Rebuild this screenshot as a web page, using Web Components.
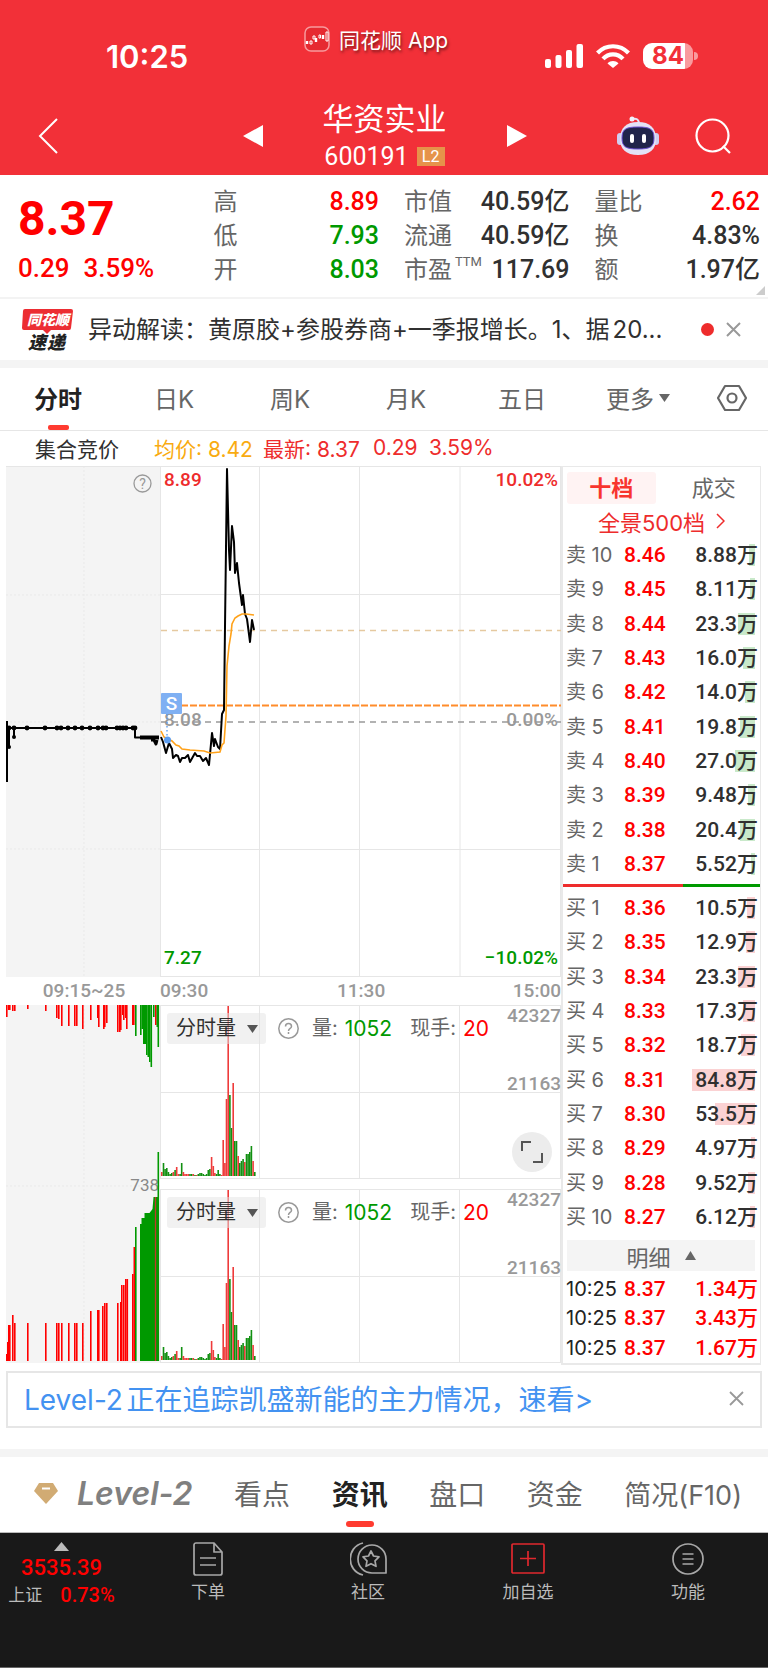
<!DOCTYPE html>
<html lang="zh-CN">
<head>
<meta charset="utf-8">
<meta name="viewport" content="width=device-width, initial-scale=1">
<title>华资实业 600191</title>
<style>
  :root {
    --up: #ff0000;
    --down: #009900;
    --brand: #f23038;
    --grey: #666666;
    --pale: #999999;
    --ink: #303030;
    --line: #e9e9e9;
    --num: Roboto, "Noto Sans CJK SC", sans-serif;
  }
  body {
    margin: 0;
    background: #fff;
    color: var(--ink);
    font-family: Inter, "Noto Sans CJK SC", sans-serif;
    font-size: 24px;
  }
</style>
</head>
<body>
<stock-page></stock-page>

<script>
  const base = `
    * { box-sizing: border-box; }
    button, select, a { font: inherit; color: inherit; text-decoration: none; }
    button { border: 0; padding: 0; background: none; white-space: nowrap; }
    svg { display: block; flex: none; }
  `;

  class BaseElement extends HTMLElement {
    constructor() {
      super();
      this._shadowRoot = this.attachShadow({mode: 'open'});
    }

    connectedCallback() {
      this._shadowRoot.innerHTML = `<style>${base}</style>${this.render()}`;
    }
  }

  class StatusBar extends BaseElement {
    render() {
      return `
        <style>
          :host { display: grid; grid-template-columns: 198px 1fr auto; padding: 18px 70px 0 106px; height: 87px; color: #fff; }
          .time { font-size: 31px; font-weight: 600; line-height: 40px; margin-top: 19px; }
          .app { display: flex; gap: 9px; height: 42px; align-items: center; font-size: 21px; text-shadow: 1px 2px 3px rgba(0, 0, 0, .55); }
          .signals { display: flex; gap: 13px; justify-content: flex-end; align-items: center; height: 40px; margin-top: 18px; }
          .battery { display: flex; align-items: center; gap: 1px; }
          .level { width: 50px; height: 26px; border-radius: 9px; line-height: 26px; text-align: center; font-size: 24px; font-weight: 700; color: var(--brand);
            background: linear-gradient(90deg, #fff 84%, #f99a9e 84%); }
          .nub { width: 4px; height: 8px; border-radius: 0 4px 4px 0; background: #f99a9e; }
        </style>
        <div class="time">10:25</div>
        <div class="app">
          <svg width="26" height="26" viewBox="0 0 26 26" fill="none">
            <rect x="1" y="1" width="24" height="24" rx="6" fill="#e62a31" stroke="#f79a9d" stroke-width="1.5"/>
            <path d="M3 15v3M12 12v4M19 9v4" stroke="#fff" stroke-width="2.4"/>
            <path d="M6 15h2v3H6zM9 10h2v3H9zM15 9h1.500v3H15zM22 6h2v9h-2z" stroke="#fff" stroke-width="1"/>
          </svg>
          <span>同花顺 App</span>
        </div>
        <div class="signals">
          <svg width="38" height="24" viewBox="0 0 38 24" fill="#fff">
            <rect y="15" width="6" height="9" rx="2"/><rect x="10.500" y="11" width="6" height="13" rx="2"/>
            <rect x="21" y="6" width="6" height="18" rx="2"/><rect x="31.500" width="6.500" height="24" rx="2"/>
          </svg>
          <svg width="34" height="24" viewBox="0 0 34 24" fill="none" stroke="#fff" stroke-width="4.200">
            <path d="M1.500 9C10 0 24 0 32.500 9"/><path d="M7 14.800c5.500-6 14.500-6 20 0"/>
            <path d="M11.500 19.500L17 24l5.500-4.500c-3-3.200-8-3.200-11 0z" fill="#fff" stroke="none"/>
          </svg>
          <div class="battery"><div class="level">84</div><div class="nub"></div></div>
        </div>`;
    }
  }

  class StockHeader extends BaseElement {
    render() {
      return `
        <style>
          :host { display: grid; grid-template-columns: 1fr 284px 1fr; padding: 9px 37px 0 38px; height: 88px; color: #fff; }
          .side, .middle { display: flex; align-items: center; height: 79px; }
          .side.right { justify-content: flex-end; gap: 36px; }
          .middle { justify-content: space-between; }
          h1 { margin: 0; font-size: 31px; font-weight: 400; line-height: 42px; }
          .title { text-align: center; }
          .code { display: flex; align-items: center; justify-content: center; gap: 8px; font-size: 25px; line-height: 34px; font-family: var(--num); }
          .badge { background: #e6934a; font-size: 16px; line-height: 19px; width: 28px; }
        </style>
        <div class="side">
          <button aria-label="返回"><svg width="20" height="36" viewBox="0 0 20 36" fill="none" stroke="#fff" stroke-width="2"><path d="M19 1L2 18l17 17"/></svg></button>
        </div>
        <div class="middle">
          <button aria-label="上一只"><svg width="20" height="22" fill="#fff"><path d="M20 0v22L0 11z"/></svg></button>
          <div class="title">
            <h1>华资实业</h1>
            <div class="code"><span>600191</span><span class="badge">L2</span></div>
          </div>
          <button aria-label="下一只"><svg width="20" height="22" fill="#fff"><path d="M0 0v22l20-11z"/></svg></button>
        </div>
        <div class="side right">
          <button aria-label="智能助手">
            <svg width="42" height="40" viewBox="0 0 42 40">
              <path d="M15 3c4-1 7 0 7 5" fill="none" stroke="#e5e4f7" stroke-width="2"/>
              <circle cx="15" cy="3" r="2.500" fill="#f2f1fb"/>
              <rect y="17" width="6" height="12" rx="3" fill="#cfcef0"/><rect x="36" y="17" width="6" height="12" rx="3" fill="#cfcef0"/>
              <path d="M21 6c12 0 18 6 18 17 0 10-6 16-18 16S3 33 3 23C3 12 9 6 21 6z" fill="#e3e2f6"/>
              <path d="M21 11c12 0 16 2 16 11s-4 11-16 11S5 31 5 22s4-11 16-11z" fill="#20244a" stroke="#6a4fd0" stroke-width="1"/>
              <rect x="13" y="18" width="4" height="9" rx="2" fill="#fff"/><rect x="25" y="18" width="4" height="9" rx="2" fill="#fff"/>
            </svg>
          </button>
          <button aria-label="搜索"><svg width="36" height="36" viewBox="0 0 36 36" fill="none" stroke="#fff" stroke-width="2.200"><circle cx="17.500" cy="17.500" r="16"/><path d="M28 28l7 7"/></svg></button>
        </div>`;
    }
  }

  class QuoteSummary extends BaseElement {
    render() {
      const columns = [
        [['高', '8.89', 'up'], ['低', '7.93', 'down'], ['开', '8.03', 'down']],
        [['市值', '40.59亿'], ['流通', '40.59亿'], ['市盈<sup>TTM</sup>', '117.69']],
        [['量比', '2.62', 'up'], ['换', '4.83%'], ['额', '1.97亿']]
      ];
      return `
        <style>
          :host { display: grid; grid-template-columns: 170fr 165fr 165fr 165fr; column-gap: 25px; position: relative;
            padding: 10px 8px 0 18px; height: 124px; border-bottom: 2px solid #f3f3f3; font-family: var(--num); }
          .price { color: var(--up); font-weight: 500; }
          .last { font-size: 48px; font-weight: 700; line-height: 68px; }
          .change { font-size: 26px; line-height: 30px; display: flex; gap: 14px; }
          dl { margin: 0; }
          dl div { display: flex; justify-content: space-between; line-height: 34px; }
          dt { color: var(--grey); white-space: nowrap; }
          dd { margin: 0; font-size: 25px; font-weight: 500; }
          sup { font-size: 13px; line-height: 0; vertical-align: 12px; margin-left: 3px; }
          .up { color: var(--up); }
          .down { color: var(--down); }
          .corner { position: absolute; right: 3px; bottom: 2px; }
        </style>
        <div class="price">
          <div class="last">8.37</div>
          <div class="change"><span>0.29</span><span>3.59%</span></div>
        </div>
        ${columns.map(rows => `<dl>${rows.map(([k, v, c = '']) => `<div><dt>${k}</dt><dd class="${c}">${v}</dd></div>`).join('')}</dl>`).join('')}
        <svg class="corner" width="9" height="9" fill="#ccc"><path d="M9 0v9H0z"/></svg>`;
    }
  }

  class NewsStrip extends BaseElement {
    render() {
      return `
        <style>
          :host { display: flex; align-items: center; height: 61px; padding: 0 27px 0 22px; }
          .news { flex: 1; min-width: 0; margin: 0 12px 0 14px; white-space: nowrap; line-height: 40px; text-autospace: normal; }
          .dot { width: 13px; height: 13px; border-radius: 50%; background: #ee2c2c; margin-right: 12px; }
        </style>
        <svg width="52" height="44" viewBox="0 0 52 44" font-weight="900" font-style="italic">
          <path d="M3 1h46a2 2 0 0 1 2 2l-2 17a2 2 0 0 1-2 2H29l-4 4-4-4H2a2 2 0 0 1-2-2L1 3a2 2 0 0 1 2-2z" fill="#ec2d33"/>
          <text x="5" y="17" font-size="14" fill="#fff">同花顺</text>
          <text x="6" y="41" font-size="18" fill="#222">速</text><text x="25" y="41" font-size="18" fill="#222">递</text>
        </svg>
        <a class="news" href="#news">异动解读：黄原胶+参股券商+一季报增长。1、据20...</a>
        <span class="dot"></span>
        <button aria-label="关闭"><svg width="15" height="15" fill="none" stroke="#999" stroke-width="2"><path d="M1 1l13 13M14 1L1 14"/></svg></button>`;
    }
  }

  class PeriodTabs extends BaseElement {
    render() {
      return `
        <style>
          :host { display: grid; grid-template-columns: repeat(6, 29fr) 18fr; height: 71px; border-top: 8px solid #f4f4f4; border-bottom: 1px solid #e6e6e6; color: var(--grey); justify-items: center; }
          button { position: relative; display: flex; align-items: center; gap: 5px; padding-bottom: 3px; }
          .on { color: #222; font-weight: 700; }
          .on::after { content: ""; position: absolute; left: 50%; bottom: 0; width: 21px; height: 5px; margin-left: -10px; border-radius: 2px; background: #ff3b30; }
        </style>
        <button class="on">分时</button>
        <button>日K</button>
        <button>周K</button>
        <button>月K</button>
        <button>五日</button>
        <button>更多<svg width="11" height="8" fill="#666"><path d="M0 0h11L5.500 8z"/></svg></button>
        <button aria-label="设置">
          <svg width="30" height="28" viewBox="0 0 30 28" fill="none" stroke="#666" stroke-width="2.200"><path d="M8 2h14l7 12-7 12H8L1 14z" stroke-linejoin="round"/><circle cx="15" cy="14" r="4.500"/></svg>
        </button>`;
    }
  }

  class PriceLine extends BaseElement {
    render() {
      return `
        <style>
          :host { display: flex; align-items: center; height: 35px; padding: 0 0 2px 35px; font-size: 21px; color: #ee2c2c; white-space: pre; }
          .name { width: 119px; color: var(--ink); }
          .avg { width: 109px; color: #f9ab10; }
          .pair { width: 110px; }
          .diff { width: 56px; }
        </style>
        <span class="name">集合竞价</span><span class="avg">均价: 8.42</span><span class="pair">最新: 8.37</span><span class="diff">0.29</span><span>3.59%</span>`;
    }
  }

  class PriceChart extends BaseElement {
    render() {
      const dots = [3, 8, 21, 39, 51, 55, 62, 69, 76, 84, 92, 97, 100, 111, 114, 117, 120, 127, 129];
      return `
        <style>
          :host { display: block; font-family: var(--num); }
          svg { width: 100%; height: auto; font-size: 19px; }
          .axis { display: grid; grid-template-columns: 154fr 106fr 190fr 105fr; height: 28px; line-height: 28px; font-size: 19px; color: var(--pale); font-weight: 500; }
          .axis :first-child { text-align: center; padding-left: 2px; }
          .axis :nth-child(3) { padding-left: 71px; }
          .axis :last-child { text-align: right; }
        </style>
        <svg viewBox="0 0 555 511" fill="none">
          <rect width="154" height="511" fill="#f4f4f4"/>
          <path d="M78 0v511M0 129h154M0 256h154M0 383h154" stroke="#e9e9e9" stroke-dasharray="2 2"/>
          <path d="M0 .5h555M154.500 0v511M253.500 0v511M353.500 0v511M454 0v511M554.500 0v511M155 128.500h400M155 383.500h400M155 510.500h400" stroke="#e6e6e6"/>
          <path d="M155 164.500h400" stroke="#e5c9a0" stroke-width="1.300" stroke-dasharray="6 5"/>
          <path d="M155 256h400" stroke="#999" stroke-width="1.300" stroke-dasharray="6 5"/>
          <path d="M175 239.500h380" stroke="#ff8c2b" stroke-width="2" stroke-dasharray="7 2"/>
          <g font-weight="500">
            <text x="158" y="20" fill="#ee2c2c">8.89</text><text x="552" y="20" fill="#ee2c2c" text-anchor="end">10.02%</text>
            <text x="158" y="498" fill="#090">7.27</text><text x="552" y="498" fill="#090" text-anchor="end">−10.02%</text>
            <text x="158" y="260" fill="#999">8.08</text><text x="552" y="260" fill="#999" text-anchor="end">0.00%</text>
          </g>
          <circle cx="136.500" cy="17.500" r="8.500" stroke="#999" stroke-width="1.300"/>
          <text x="136.500" y="23" fill="#999" text-anchor="middle" font-size="14">?</text>
          <g stroke="#000" stroke-width="2" stroke-linejoin="round">
            <path d="M1 255v61M3 262v19M8 262v9M3 262h126v9.500h24" />
            <path d="M134 271.500h19" stroke-width="4"/><path d="M145 274h3l2 4 1-4" stroke-width="3"/>
            <path d="M155 271l2 5 3 11 3-10 3 6 1 9 3-3 2 1 2 6 2-4h3l3-3 2 7 5-9 2 3h3l3 5 3-3 3 7 3-32 2 13 1-7 3 8 2 2 2-35 2-4 1-83 2-158 2 81 1 20 2-44 2 16 1 31 2-10 2 20 3 22 1-10 2 19 2 5 3 23 2-22 2 10"/>
          </g>
          <g fill="#000">${dots.map(x => `<circle cx="${x}" cy="262" r="2.400"/>`).join('')}<circle cx="3" cy="281" r="2"/><circle cx="8" cy="271" r="2"/></g>
          <path d="M155 265l3 6 4 2 4 2 4 4 3 1 3 3 8 1 14 1 6 2 10-1 2-7 2-2 2-27 1-50 2-20 2-12 1-10 3-6 3-2 4-2h4l8 1" stroke="#ffa21a" stroke-width="1.600"/>
          <path d="M161 248v22" stroke="#5b9df0" stroke-width="1.400" stroke-dasharray="1.500 2.500"/>
          <circle cx="161.500" cy="274" r="3.500" fill="#5b9df0"/>
          <rect x="155" y="227" width="21" height="21" rx="1" fill="#7fb0f3"/>
          <text x="165.500" y="244" fill="#fff" text-anchor="middle" font-weight="500">S</text>
        </svg>
        <div class="axis"><span>09:15~25</span><span>09:30</span><span>11:30</span><span>15:00</span></div>`;
    }
  }

  class AuctionVolume extends BaseElement {
    // [x, height], a negative height is a sell-side bar
    bars(list, place) {
      return list.map(([x, h]) => `<rect x="${x}" y="${place(Math.abs(h))}" width="1.600" height="${Math.abs(h)}" fill="${h > 0 ? '#f00' : '#090'}"/>`).join('');
    }

    render() {
      const top = [[0, 12], [2, 5], [3, 5], [6, 6], [8, 6], [21, 4], [39, 6], [50, 13], [52, 14], [55, 21], [62, 21], [68, 21], [70, 21], [76, 24], [84, 15],
        [91, 13], [92, 22], [97, 24], [98, 22], [100, 18], [111, 27], [113, 27], [114, 25], [116, 10], [117, 15], [119, 13], [120, 24], [126, 20], [127, 20],
        [129, -31], [134, -30], [135.5, -24], [137, -39], [138, -39], [139, -39], [140, -50], [141.5, -52], [143, -57], [144.5, -62], [147, -12], [149, 20], [150.5, -22], [151.5, -42]];
      const bottom = [[0, 7], [1, 19], [2, 36], [3, 36], [6, 46], [8, 38], [21, 38], [39, 38], [50, 38], [52, 38], [55, 38], [62, 38], [68, 38], [70, 38], [76, 38],
        [84, 50], [91, 51], [92, 51], [96, 55], [98, 58], [100, 58], [111, 58], [114, 59], [115, 76], [117, 76], [119, 82], [120.5, 82], [126, 87], [127.5, 114]];
      const block = [[129, -134], [151.5, -209]];
      return `
        <style>
          :host { display: block; font-family: var(--num); }
          svg { width: 100%; height: auto; }
        </style>
        <svg viewBox="0 0 154 358">
          <rect width="154" height="358" fill="#f4f4f4"/>
          <path d="M78 0v358M0 181h154" stroke="#e9e9e9" stroke-dasharray="2 2"/>
          ${this.bars(top, () => 0)}
          <text x="153" y="186" text-anchor="end" font-size="17" fill="#888">738</text>
          ${this.bars(bottom, h => 356 - h)}
          <path d="M134 356V219h1.500v-6h3v-5h5l3-4 1-12h4.500v164z" fill="#090"/>
          <path d="M149.500 192v164" stroke="#c0392b" stroke-width="1.300"/>
          ${this.bars(block, h => 356 - h)}
        </svg>`;
    }
  }

  class VolumePanel extends BaseElement {
    render() {
      const minutes = [4, -13, -7, -8, -4, -2, -3, 4, -6, 9, 2, -2, -13, 4, 2, 2, 2, -2, -2, 2, -1, 1, -2, -3, -3, -2, -1, -2, -6, -7, 19, 10, 3, -2, -6, -2, 1,
        36, 13, 77, 170, -81, -48, 93, -35, -35, 20, -13, -15, -17, 14, -22, -22, -24, -30, 15, -4];
      return `
        <style>
          :host { display: block; position: relative; font-size: 20px; line-height: 31px; }
          .plot { width: 100%; height: auto; font-family: var(--num); }
          .tools { position: absolute; top: 8px; left: 7px; display: flex; align-items: center; }
          label { position: relative; display: flex; align-items: center; }
          select { appearance: none; border: 0; border-radius: 3px; width: 99px; height: 31px; padding: 0 9px; color: var(--ink); background: rgba(228, 228, 228, .5); }
          label svg { position: absolute; right: 8px; pointer-events: none; }
          .help { margin: 0 13px 0 12px; }
          .down, .up { font-size: 21px; }
          .down { color: var(--down); margin: 0 18px 0 7px; }
          .up { color: var(--up); margin-left: 7px; }
          .grey { color: var(--grey); }
          .full { position: absolute; right: 9px; top: 127px; width: 40px; height: 40px; border-radius: 50%; background: #ececec; display: flex; align-items: center; justify-content: center; }
        </style>
        <svg class="plot" viewBox="0 0 401 174">
          <path d="M0 .5h401M0 173.500h401M.5 0v174M99.500 0v174M199.500 0v174M299.500 0v174M400.500 0v174M0 87.500h401" stroke="#e6e6e6"/>
          ${minutes.map((h, i) => `<rect x="${(1 + i * 1.66).toFixed(1)}" y="${171 - Math.abs(h)}" width="1.600" height="${Math.abs(h)}" fill="${h > 0 ? '#ee3b3b' : '#129012'}"/>`).join('')}
          <g text-anchor="end" font-size="19" font-weight="500" fill="#999"><text x="401" y="17">42327</text><text x="401" y="85">21163</text></g>
        </svg>
        <div class="tools">
          <label><select aria-label="指标"><option>分时量</option></select><svg width="11" height="8" fill="#555"><path d="M0 0h11L5.500 8z"/></svg></label>
          <button class="help" aria-label="说明"><svg width="21" height="21" fill="none"><circle cx="10.500" cy="10.500" r="9.700" stroke="#999" stroke-width="1.500"/><path d="M7.500 8.500c0-4 6-4 6 0 0 2-3 2-3 4.500M10.500 14v2" stroke="#999" stroke-width="1.500"/></svg></button>
          <span class="grey">量:</span><span class="down">1052</span><span class="grey">现手:</span><span class="up">20</span>
        </div>
        ${this.hasAttribute('expand') ? `<button class="full" aria-label="全屏"><svg width="22" height="22" fill="none" stroke="#555" stroke-width="2"><path d="M1 10V1h9M21 12v9h-9"/></svg></button>` : ''}`;
    }
  }

  class OrderBook extends BaseElement {
    rows(side, first, list) {
      return list.map(([n, price, amount, w]) => `
        <tr class="${side}"><th scope="row">${first} ${n}</th><td class="price">${price}</td><td class="amount" style="--w: ${w}px">${amount}</td></tr>`).join('');
    }

    render() {
      const sells = [[10, '8.46', '8.88万', 6], [9, '8.45', '8.11万', 5], [8, '8.44', '23.3万', 17], [7, '8.43', '16.0万', 12], [6, '8.42', '14.0万', 10],
        [5, '8.41', '19.8万', 15], [4, '8.40', '27.0万', 20], [3, '8.39', '9.48万', 7], [2, '8.38', '20.4万', 15], [1, '8.37', '5.52万', 4]];
      const buys = [[1, '8.36', '10.5万', 8], [2, '8.35', '12.9万', 9], [3, '8.34', '23.3万', 17], [4, '8.33', '17.3万', 12], [5, '8.32', '18.7万', 14],
        [6, '8.31', '84.8万', 63], [7, '8.30', '53.5万', 40], [8, '8.29', '4.97万', 4], [9, '8.28', '9.52万', 7], [10, '8.27', '6.12万', 5]];
      return `
        <style>
          :host { display: block; border: solid var(--line); border-width: 1px 1px 2px 2px; font-size: 20px; }
          .tabs { display: grid; grid-template-columns: 1fr 1fr; gap: 14px; margin: 5px 2px 0 4px; line-height: 32px; font-size: 22px; color: var(--grey); }
          .on { background: #fff3f3; color: #f8352e; font-weight: 700; border-radius: 3px; }
          .all { display: flex; justify-content: center; align-items: center; gap: 11px; height: 34px; font-size: 22px; color: #ee2c2c; }
          table { width: 100%; height: 343px; border-collapse: collapse; table-layout: fixed; }
          th, td { padding: 0; line-height: 22px; white-space: nowrap; }
          th { width: 61px; padding-left: 3px; text-align: left; font-weight: 400; color: var(--grey); }
          td { font-family: var(--num); font-weight: 500; font-size: 21px; }
          .price { width: 64px; color: var(--up); }
          .amount { text-align: right; padding-right: 2px; background: linear-gradient(var(--tint), var(--tint)) right 5px center / var(--w) 22px no-repeat; }
          .sell { --tint: #c9e9ca; }
          .buy { --tint: #fbd2d3; }
          .ratio { height: 3px; margin: 3px 0 4px; background: linear-gradient(90deg, #ee2c2c 61%, #090 61%); }
          .more { display: flex; width: calc(100% - 9px); height: 31px; margin: 6px 5px 3px 4px; align-items: center; justify-content: center; gap: 14px; background: #f4f4f4; color: var(--grey); font-size: 22px; }
          .deals { height: 89px; }
          .deals th { color: #222; }
          .deals .amount { color: var(--up); background: none; }
        </style>
        <div class="tabs"><button class="on">十档</button><button>成交</button></div>
        <a class="all" href="#depth">全景500档<svg width="9" height="16" fill="none" stroke="#ee2c2c" stroke-width="1.500"><path d="M1 1l7 7-7 7"/></svg></a>
        <table>${this.rows('sell', '卖', sells)}</table>
        <div class="ratio"></div>
        <table>${this.rows('buy', '买', buys)}</table>
        <button class="more">明细<svg width="11" height="9" fill="#666"><path d="M5.500 0L11 9H0z"/></svg></button>
        <table class="deals">
          ${['1.34万', '3.43万', '1.67万'].map(v => `<tr><th scope="row">10:25</th><td class="price">8.37</td><td class="amount">${v}</td></tr>`).join('')}
        </table>`;
    }
  }

  class LevelAlert extends BaseElement {
    render() {
      return `
        <style>
          :host { display: flex; justify-content: space-between; align-items: center; height: 57px; margin: 6px 6px 21px; padding: 0 16px 3px; border: 2px solid #e6e6e6; font-size: 28px; color: #4392f1; text-autospace: normal; }
        </style>
        <a href="#level2"><slot></slot></a>
        <button aria-label="关闭"><svg width="15" height="15" fill="none" stroke="#999" stroke-width="1.800"><path d="M1 1l13 13M14 1L1 14"/></svg></button>`;
    }
  }

  class DetailTabs extends BaseElement {
    render() {
      return `
        <style>
          :host { display: flex; justify-content: space-between; height: 84px; padding: 0 26px 0 34px; border-top: 8px solid #f4f4f4; border-bottom: 1px solid #bbb; color: var(--grey); font-size: 28px; }
          button { position: relative; display: flex; align-items: center; padding-bottom: 3px; }
          .level { gap: 19px; font: italic 600 32px Inter, sans-serif; color: #808080; }
          .f10 { font-size: 27px; }
          .on { color: #222; font-weight: 700; }
          .on::after { content: ""; position: absolute; left: 50%; bottom: 5px; width: 28px; height: 6px; margin-left: -14px; border-radius: 3px; background: #ff3b30; }
        </style>
        <button class="level"><svg width="24" height="21" viewBox="0 0 24 21"><path d="M5 0h14l5 8-12 13L0 8z" fill="#d1ab73"/><path d="M8 5.500h8" stroke="#fff" stroke-width="2"/></svg>Level-2</button>
        <button>看点</button>
        <button class="on">资讯</button>
        <button>盘口</button>
        <button>资金</button>
        <button class="f10">简况(F10)</button>`;
    }
  }

  class NavItem extends BaseElement {
    render() {
      const icons = {
        order: '<path d="M1 3a2 2 0 0 1 2-2h18l8 9v21a2 2 0 0 1-2 2H3a2 2 0 0 1-2-2zM21 1v9h8M7 16h16M7 23h16"/>',
        club: '<path d="M13 1C-4 5-4 29 13 33"/><path d="M36 31V17A14 14 0 1 0 22 31z"/><path d="M21 9l2.500 5 5.500.8-4 4 1 5.500-5-2.600-5 2.600 1-5.500-4-4 5.500-.8z"/>',
        add: '<rect x="1" y="2" width="32" height="29" rx="1"/><path d="M17 9v15M9 16.500h16"/>',
        menu: '<circle cx="16" cy="17" r="15"/><path d="M10.500 12h11M10.500 17h11M10.500 22h11"/>'
      };
      const widths = {order: 30, club: 37, add: 34, menu: 32};
      const icon = this.getAttribute('icon');
      return `
        <style>
          :host { display: flex; justify-content: center; padding-top: 9px; font-size: 17px; color: #bbb; }
          button { display: flex; flex-direction: column; align-items: center; gap: 3px; height: 64px; line-height: 26px; }
        </style>
        <button>
          <svg width="${widths[icon]}" height="34" fill="none" stroke="${icon === 'add' ? '#e0282e' : '#a8a8a8'}" stroke-width="1.700" stroke-linejoin="round">${icons[icon]}</svg>
          <slot></slot>
        </button>`;
    }
  }

  class BottomNav extends BaseElement {
    render() {
      return `
        <style>
          :host { display: grid; grid-template-columns: 128fr repeat(4, 160fr); height: 135px; background: #191919; border-bottom: 1px solid #666; }
          .index { display: flex; flex-direction: column; align-items: center; padding: 9px 5px 0 0; font-family: var(--num); color: var(--up); font-weight: 500; }
          .value { font-size: 22px; line-height: 33px; }
          .row { display: flex; gap: 18px; font-size: 20px; line-height: 22px; align-items: center; }
          .name { font-size: 17px; color: #bbb; font-weight: 400; }
        </style>
        <a class="index" href="#index">
          <svg width="15" height="9" fill="#bbb"><path d="M7.500 0L15 9H0z"/></svg>
          <span class="value">3535.39</span>
          <span class="row"><span class="name">上证</span><span>0.73%</span></span>
        </a>
        <nav-item icon="order">下单</nav-item>
        <nav-item icon="club">社区</nav-item>
        <nav-item icon="add">加自选</nav-item>
        <nav-item icon="menu">功能</nav-item>`;
    }
  }

  class StockPage extends BaseElement {
    render() {
      return `
        <style>
          :host { display: block; }
          header { background: var(--brand); }
          .market { display: grid; grid-template-columns: 555fr 200fr; padding: 0 7px 0 6px; }
          .volumes { display: grid; grid-template-columns: 154fr 401fr; }
          .panels { display: flex; flex-direction: column; justify-content: space-between; }
        </style>
        <header>
          <status-bar></status-bar>
          <stock-header></stock-header>
        </header>
        <quote-summary></quote-summary>
        <news-strip></news-strip>
        <period-tabs></period-tabs>
        <price-line></price-line>
        <div class="market">
          <div>
            <price-chart></price-chart>
            <div class="volumes">
              <auction-volume></auction-volume>
              <div class="panels">
                <volume-panel expand></volume-panel>
                <volume-panel></volume-panel>
              </div>
            </div>
          </div>
          <order-book></order-book>
        </div>
        <level-alert>Level-2正在追踪凯盛新能的主力情况，速看&gt;</level-alert>
        <detail-tabs></detail-tabs>
        <bottom-nav></bottom-nav>`;
    }
  }

  customElements.define('status-bar', StatusBar);
  customElements.define('stock-header', StockHeader);
  customElements.define('quote-summary', QuoteSummary);
  customElements.define('news-strip', NewsStrip);
  customElements.define('period-tabs', PeriodTabs);
  customElements.define('price-line', PriceLine);
  customElements.define('price-chart', PriceChart);
  customElements.define('auction-volume', AuctionVolume);
  customElements.define('volume-panel', VolumePanel);
  customElements.define('order-book', OrderBook);
  customElements.define('level-alert', LevelAlert);
  customElements.define('detail-tabs', DetailTabs);
  customElements.define('nav-item', NavItem);
  customElements.define('bottom-nav', BottomNav);
  customElements.define('stock-page', StockPage);
</script>
</body>
</html>
